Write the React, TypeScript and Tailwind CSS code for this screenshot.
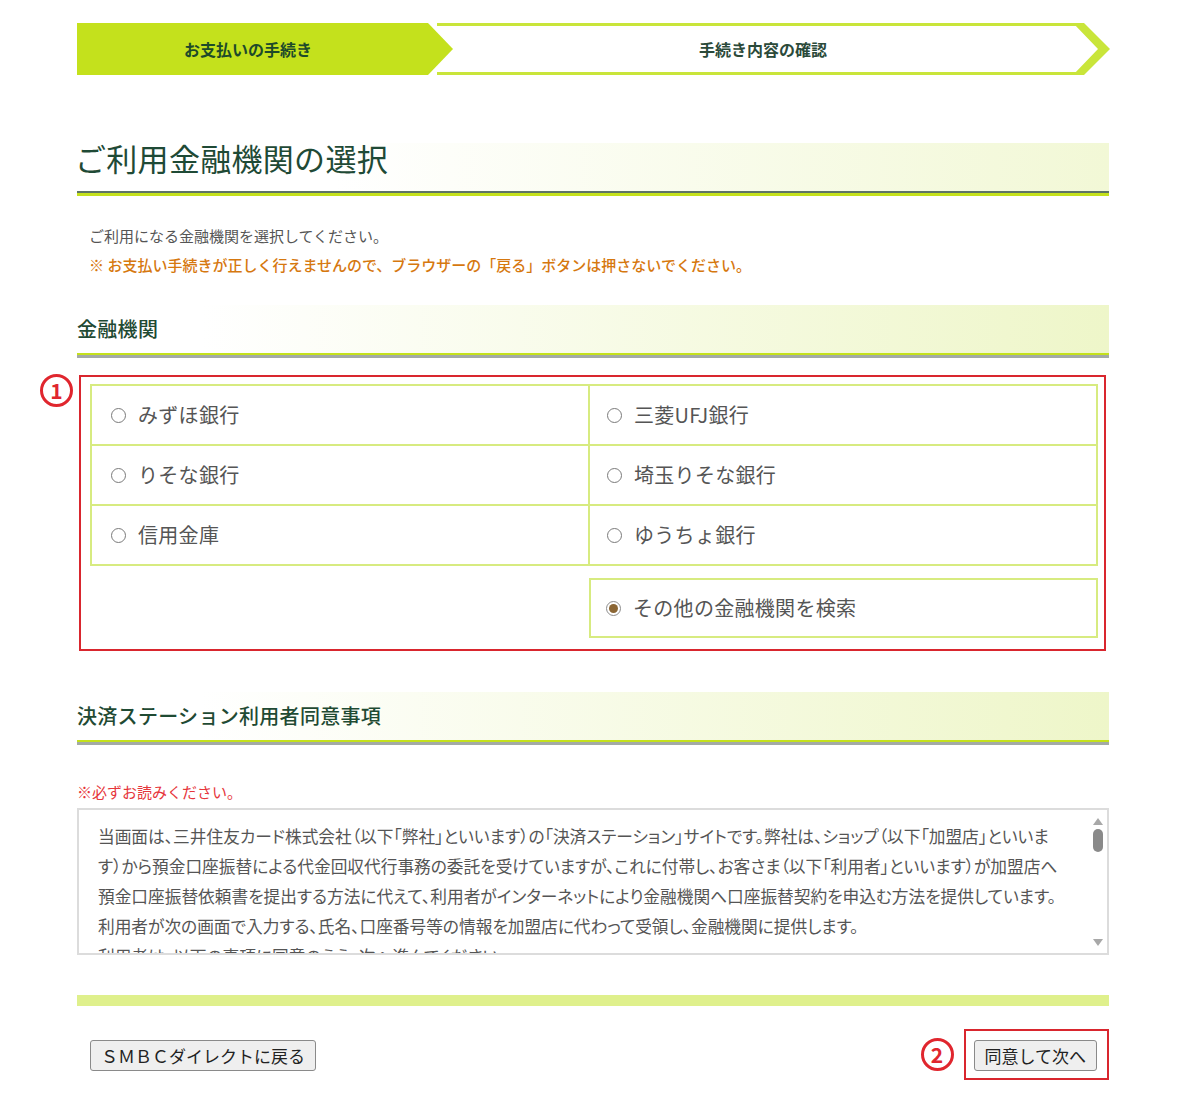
import React from "react";

const LIME = "#c4e11c";

function Radio({ checked }: { checked?: boolean }) {
  return checked ? (
    <span className="flex h-[15px] w-[15px] shrink-0 items-center justify-center rounded-full border border-[#8c8c8c] bg-white">
      <span className="h-[9px] w-[9px] rounded-full bg-[#8b6634]" />
    </span>
  ) : (
    <span className="h-[15px] w-[15px] shrink-0 rounded-full border-[1.5px] border-[#7a7a7a] bg-white" />
  );
}

function Cell({ label, right, checked }: { label: string; right?: boolean; checked?: boolean }) {
  return (
    <div
      className={`flex h-[60px] items-center gap-[12px] border-b-2 border-r-2 border-[#d7eb80] ${
        right ? "pl-[17px]" : "pl-[19px]"
      }`}
    >
      <Radio checked={checked} />
      <span className="text-[20px] leading-none tracking-[0.3px] text-[#555]">{label}</span>
    </div>
  );
}

function SectionHeading({ children }: { children: React.ReactNode }) {
  return (
    <div>
      <div className="flex h-[48px] items-center bg-[linear-gradient(to_right,#ffffff_12%,#eef6c9)]">
        <span className="text-[20px] font-medium tracking-[0.3px] text-[#1f4a33]">{children}</span>
      </div>
      <div className="h-[2px] bg-[#c4e11c]" />
      <div className="h-[3px] bg-[#a3aaa6]" />
    </div>
  );
}

function Annot({ n }: { n: string }) {
  return (
    <span className="flex h-[33px] w-[33px] items-center justify-center rounded-full border-[3px] border-[#e0262e] bg-white text-[21px] font-bold leading-none text-[#e0262e]">
      {n}
    </span>
  );
}

export default function App() {
  const lines = [
    "当画面は、三井住友カード株式会社（以下「弊社」といいます）の「決済ステーション」サイトです。弊社は、ショップ（以下「加盟店」といいま",
    "す）から預金口座振替による代金回収代行事務の委託を受けていますが、これに付帯し、お客さま（以下「利用者」といいます）が加盟店へ",
    "預金口座振替依頼書を提出する方法に代えて、利用者がインターネットにより金融機関へ口座振替契約を申込む方法を提供しています。",
    "利用者が次の画面で入力する、氏名、口座番号等の情報を加盟店に代わって受領し、金融機関に提供します。",
    "利用者は、以下の事項に同意のうえ、次へ進んでください。",
  ];
  return (
    <div className="min-h-[1102px] bg-white font-['Noto_Sans_CJK_JP',sans-serif]">
      <div className="ml-[77px] w-[1032px] pt-[23px]">
        {/* Step bar */}
        <div className="relative h-[52px]">
          <svg className="absolute inset-0" width="1034" height="52" viewBox="0 0 1034 52">
            <polygon points="0,0 351,0 376,26 351,52 0,52" fill={LIME} />
            <rect x="360" y="0" width="640" height="3" fill="#c9e53a" />
            <rect x="360" y="49" width="640" height="3" fill="#c9e53a" />
            <polygon points="996,0 1007,0 1033,26 1007,52 996,52 1021,26" fill="#c9e53a" />
          </svg>
          <div className="relative flex h-full items-center">
            <span className="w-[342px] text-center text-[16px] font-bold text-[#1d4a2a]">お支払いの手続き</span>
            <span className="ml-[34px] w-[620px] text-center text-[16px] font-bold text-[#2b4a3a]">手続き内容の確認</span>
          </div>
        </div>

        {/* Main heading */}
        <div className="mt-[68px]">
          <div className="flex h-[48px] items-start bg-[linear-gradient(to_right,#ffffff_25%,#f2f8d6)]">
            <h1 className="-ml-[2px] -mt-[5px] text-[31px] font-normal leading-[40px] tracking-[0.3px] text-[#1f4a36]">
              ご利用金融機関の選択
            </h1>
          </div>
          <div className="h-[2px] bg-[#5d7466]" />
          <div className="h-[3px] bg-[#c4e11c]" />
        </div>

        <div className="mt-[25px] pl-[12px] text-[15px] leading-[29px]">
          <p className="text-[#555]">ご利用になる金融機関を選択してください。</p>
          <p className="font-medium text-[#d6780f]">
            ※ お支払い手続きが正しく行えませんので、ブラウザーの「戻る」ボタンは押さないでください。
          </p>
        </div>

        {/* Section: 金融機関 */}
        <div className="mt-[26px]">
          <SectionHeading>金融機関</SectionHeading>
        </div>

        <div className="relative ml-[2px] mt-[17px] w-[1027px] border-2 border-[#d9262e] pb-[11px] pl-[9px] pr-[6px] pt-[7px]">
          <div className="absolute left-[-41px] top-[-3px]">
            <Annot n="1" />
          </div>
          <div className="grid grid-cols-[498px_1fr] border-l-2 border-t-2 border-[#d7eb80]">
            <Cell label="みずほ銀行" />
            <Cell label="三菱UFJ銀行" right />
            <Cell label="りそな銀行" />
            <Cell label="埼玉りそな銀行" right />
            <Cell label="信用金庫" />
            <Cell label="ゆうちょ銀行" right />
          </div>
          <div className="ml-[499px] mt-[12px] flex h-[60px] items-center gap-[12px] border-2 border-[#d7eb80] pl-[15px]">
            <Radio checked />
            <span className="text-[20px] leading-none tracking-[0.3px] text-[#555]">その他の金融機関を検索</span>
          </div>
        </div>

        {/* Section: 同意事項 */}
        <div className="mt-[41px]">
          <SectionHeading>決済ステーション利用者同意事項</SectionHeading>
        </div>

        <p className="mt-[36px] text-[15px] leading-[22px] text-[#e6363b]">※必ずお読みください。</p>

        <div className="relative mt-[5px] h-[147px] overflow-hidden border-2 border-[#dcdcdc] bg-white">
          <div className="pl-[19px] pt-[11px] text-[16.7px] leading-[30px] text-[#555] [font-feature-settings:'palt']">
            {lines.map((l, i) => (
              <div key={i} className="whitespace-nowrap">
                {l}
              </div>
            ))}
          </div>
          {/* scrollbar */}
          <div className="absolute bottom-0 right-0 top-0 flex w-[18px] flex-col items-center bg-white pt-[8px]">
            <svg width="10" height="7" viewBox="0 0 10 7">
              <polygon points="5,0 10,7 0,7" fill="#a8a8a8" />
            </svg>
            <div className="mt-[4px] h-[23px] w-[10px] rounded-[5px] bg-[#8a8a8a]" />
            <div className="flex-1" />
            <svg className="mb-[7px]" width="10" height="7" viewBox="0 0 10 7">
              <polygon points="0,0 10,0 5,7" fill="#a8a8a8" />
            </svg>
          </div>
        </div>

        <div className="mt-[40px] h-[11px] bg-[#dff08c]" />

        <div className="mt-[23px] flex items-center justify-between">
          <button className="ml-[13px] mt-[2px] h-[31px] rounded-[3px] border border-[#8a8a8a] bg-[#efefef] px-[10px] text-[17px] leading-none text-[#222]">
            ＳＭＢＣダイレクトに戻る
          </button>
          <div className="flex items-center gap-[10px]">
            <Annot n="2" />
            <div className="border-2 border-[#d9262e] pb-[7px] pl-[8px] pr-[10px] pt-[9px]">
              <button className="h-[31px] rounded-[3px] border border-[#8a8a8a] bg-[#efefef] px-[10px] text-[17px] leading-none text-[#222]">
                同意して次へ
              </button>
            </div>
          </div>
        </div>
      </div>
    </div>
  );
}
